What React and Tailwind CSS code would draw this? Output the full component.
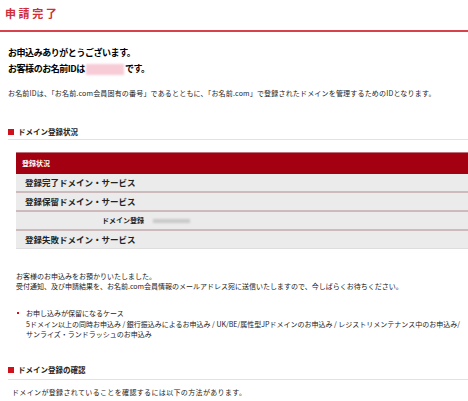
const jp = "font-['Noto_Sans_CJK_JP',sans-serif]";

function SectionHeading({ children, className = '' }) {
  return (
    <div className={`flex items-center gap-[4px] border-b border-[#e2e2e2] ${className}`}>
      <span className="w-[6px] h-[6px] bg-[#d0101b]" />
      <span className="text-[7.5px] font-bold text-[#222]">{children}</span>
    </div>
  );
}

function Row({ children, last = false, center = false }) {
  return (
    <div
      className={`flex items-center bg-[#ebebeb] ${
        last ? 'h-[18px] border-b border-[#dddddd]' : 'h-[19px] border-b-2 border-[#cdbabd]'
      } ${center ? 'pl-[86px]' : 'pl-[9px]'}`}
    >
      {children}
    </div>
  );
}

export default function App() {
  return (
    <div className={`w-[468px] h-[401px] overflow-hidden bg-white text-[#222] ${jp}`}>
      {/* title */}
      <div className="h-[30px] pl-[5px] pt-[7px]">
        <h1 className="text-[11px] leading-[13px] font-bold tracking-[2.6px] text-[#cf2e38]">申請完了</h1>
      </div>
      <div className="h-[2px] bg-[#d6434c]" />

      <div className="pl-[8px]">
        <div className="mt-[13px] text-[9px] leading-[16px] font-bold tracking-[-0.45px] text-black">
          <p>お申込みありがとうございます。</p>
          <p className="flex items-center">
            お客様のお名前IDは
            <span className="inline-block w-[38px] h-[11px] mx-[1px] bg-[#f7ccd6] blur-[1px]" />
            です。
          </p>
        </div>

        <p className="mt-[11px] text-[7px] leading-[10px] tracking-[0.18px] whitespace-nowrap">
          お名前IDは、「お名前.com会員固有の番号」であるとともに、「お名前.com」で登録されたドメインを管理するためのIDとなります。
        </p>

        <SectionHeading className="mt-[27px] h-[15px] pb-[1px]">ドメイン登録状況</SectionHeading>

        {/* status table */}
        <div className="mt-[12px] ml-[8px]">
          <div className="h-[22px] flex items-center pl-[6px] bg-[#a30011] border-t border-[#c0707a]">
            <span className="text-[7px] font-bold text-white">登録状況</span>
          </div>
          <Row>
            <span className="text-[8.5px] font-bold text-[#222]">登録完了ドメイン・サービス</span>
          </Row>
          <Row>
            <span className="text-[8.5px] font-bold text-[#222]">登録保留ドメイン・サービス</span>
          </Row>
          <Row center>
            <span className="text-[7px] font-bold text-[#222]">ドメイン登録</span>
            <span className="ml-[9px] w-[37px] h-[4px] bg-[#c9c9c9] blur-[1px]" />
          </Row>
          <Row last>
            <span className="text-[8.5px] font-bold text-[#222]">登録失敗ドメイン・サービス</span>
          </Row>
        </div>

        <div className="mt-[22px] ml-[8px] text-[7px] leading-[10px] whitespace-nowrap">
          <p>お客様のお申込みをお預かりいたしました。</p>
          <p>受付通知、及び申請結果を、お名前.com会員情報のメールアドレス宛に送信いたしますので、今しばらくお待ちください。</p>
        </div>

        <div className="mt-[17px] ml-[9px] flex gap-[7px] text-[7px] leading-[10.5px] whitespace-nowrap">
          <span className="mt-[4px] w-[2px] h-[2px] bg-[#d0101b]" />
          <div>
            <p>お申し込みが保留になるケース</p>
            <p>5ドメイン以上の同時お申込み / 銀行振込みによるお申込み / UK/BE/属性型JPドメインのお申込み / レジストリメンテナンス中のお申込み/</p>
            <p>サンライズ・ランドラッシュのお申込み</p>
          </div>
        </div>

        <SectionHeading className="mt-[24px] h-[16px] pb-[2px]">ドメイン登録の確認</SectionHeading>

        <p className="mt-[7px] ml-[4px] text-[7px] leading-[10px] tracking-[0.35px] whitespace-nowrap">
          ドメインが登録されていることを確認するには以下の方法があります。
        </p>
      </div>
    </div>
  );
}
